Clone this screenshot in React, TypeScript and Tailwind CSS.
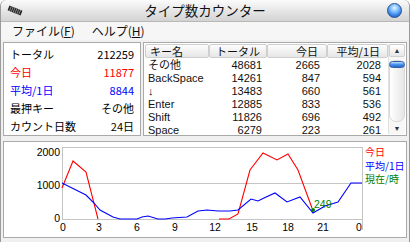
import React from 'react'

const STATS = [
  { label: 'トータル', value: '212259', color: 'text-black' },
  { label: '今日', value: '11877', color: 'text-[#ff0000]' },
  { label: '平均/1日', value: '8844', color: 'text-[#0000ff]' },
  { label: '最押キー', value: 'その他', color: 'text-black' },
  { label: 'カウント日数', value: '24日', color: 'text-black' },
]

const ROWS = [
  ['その他', '48681', '2665', '2028'],
  ['BackSpace', '14261', '847', '594'],
  ['↓', '13483', '660', '561'],
  ['Enter', '12885', '833', '536'],
  ['Shift', '11826', '696', '492'],
  ['Space', '6279', '223', '261'],
]

const RED_A = '62,188 73,161 86,172 98,219'
const RED_B = '219,219 229,219 238,214 250,170 263,153 277,160 288,154 298,170 312,208'
const BLUE =
  '62,183 74,189 86,195 94,203 100,210 113,217 120,219 137,219 142,217 148,216 158,219 165,219 172,218 187,217 198,211 207,210 218,211 230,211 238,210 251,199 258,201 264,198 275,193 287,202 300,197 313,213 325,206 338,202 351,183 362,183'

const X_LABELS: [string, number][] = [
  ['0', 63], ['3', 99], ['6', 137], ['9', 175], ['12', 215],
  ['15', 252], ['18', 288], ['21', 323], ['0', 359],
]

function TitleBar() {
  return (
    <div className="h-[22px] flex items-center rounded-t-[6px] bg-linear-to-b from-[#fbfbfb] to-[#d3d3d3] border-b border-[#b8b8b8]">
      <div className="w-[40px] pl-[6px] flex items-center">
        {/* keyboard-ish app icon */}
        <svg width="16" height="11" viewBox="0 0 16 11">
          <g transform="rotate(22 8 5.5)">
            <rect x="1" y="3" width="14" height="5" fill="#222" />
            <path d="M3 3v5M5 3v5M7 3v5M9 3v5M11 3v5M13 3v5" stroke="#999" strokeWidth="0.8" />
          </g>
        </svg>
      </div>
      <div className="flex-1 text-center text-[13.5px] text-[#111] font-['Noto_Sans_CJK_JP',sans-serif] leading-none pt-[1px]">
        タイプ数カウンター
      </div>
      <div className="w-[40px] flex justify-end pr-[7px]">
        <div className="w-[15px] h-[15px] rounded-full border border-[#2b4f8f] bg-[radial-gradient(circle_at_50%_30%,#e6f4ff_0%,#7fc0ff_35%,#2f7be0_70%,#1a4fb0_100%)]" />
      </div>
    </div>
  )
}

function MenuBar() {
  return (
    <div className="h-[18px] flex items-center gap-[17px] pl-[11px] bg-[#f6f6f6] text-[12px] text-[#111] font-['Noto_Sans_CJK_JP',sans-serif] leading-none">
      <span>ファイル(<span className="underline">F</span>)</span>
      <span>ヘルプ(<span className="underline">H</span>)</span>
    </div>
  )
}

function StatsPanel() {
  return (
    <div className="w-[138px] h-full bg-white border border-[#a9a9a9] pt-[2px] px-[6px] font-['Noto_Sans_CJK_JP',sans-serif] text-[11px]">
      {STATS.map(s => (
        <div key={s.label} className={`h-[18px] flex items-center justify-between leading-none ${s.color}`}>
          <span>{s.label}</span>
          <span>{s.value}</span>
        </div>
      ))}
    </div>
  )
}

function HeaderCell({ children, w, align, pad }: { children: React.ReactNode; w: string; align: string; pad: string }) {
  return (
    <div className={`${w} h-[14px] flex items-center ${align} ${pad} bg-linear-to-b from-[#fdfdfd] to-[#e6e6e6] border border-[#cfcfcf] rounded-[2px] leading-none`}>
      {children}
    </div>
  )
}

function Scrollbar() {
  return (
    <div className="w-[17px] h-full flex flex-col items-center bg-[#f7f7f7] border-l border-[#e0e0e0]">
      <div className="w-[16px] h-[13px] flex items-center justify-center border border-[#cfcfcf] rounded-[2px] bg-linear-to-b from-white to-[#e8e8e8] text-[7px] text-[#333] leading-none">
        ▲
      </div>
      <div className="mt-[3px] w-[16px] flex-1 rounded-[7px] border border-[#d8d8d8] bg-linear-to-r from-white to-[#e6e6e6] flex flex-col items-center">
        <div className="w-[16px] h-[7px] rounded-[4px] border border-[#2d5da8] bg-linear-to-b from-[#bfe0ff] via-[#4a93ea] to-[#2766c8]" />
      </div>
      <div className="w-[16px] h-[12px] flex items-center justify-center text-[7px] text-[#333] leading-none">
        ▼
      </div>
    </div>
  )
}

function KeyTable() {
  return (
    <div className="flex-1 h-full bg-white border border-[#a9a9a9] p-[1px] flex">
      <div className="flex-1 flex flex-col">
        <div className="flex font-['Noto_Sans_CJK_JP',sans-serif] text-[11px] text-[#111]">
          <HeaderCell w="w-[64px]" align="justify-start" pad="pl-[4px]">キー名</HeaderCell>
          <HeaderCell w="w-[58px]" align="justify-end" pad="pr-[6px]">トータル</HeaderCell>
          <HeaderCell w="w-[60px]" align="justify-end" pad="pr-[8px]">今日</HeaderCell>
          <HeaderCell w="w-[61px]" align="justify-end" pad="pr-[7px]">平均/1日</HeaderCell>
        </div>
        <div className="pt-[1px] font-['Liberation_Sans','Noto_Sans_CJK_JP',sans-serif] text-[11px] text-[#111]">
          {ROWS.map(r => (
            <div key={r[0]} className="h-[13px] flex items-center leading-none">
              <span className="w-[64px] pl-[3px]">{r[0]}</span>
              <span className="w-[58px] text-right pr-[5px]">{r[1]}</span>
              <span className="w-[60px] text-right pr-[7px]">{r[2]}</span>
              <span className="w-[61px] text-right pr-[7px]">{r[3]}</span>
            </div>
          ))}
        </div>
      </div>
      <Scrollbar />
    </div>
  )
}

function Chart() {
  return (
    <div className="h-[97px] bg-white border border-[#a9a9a9]">
      <svg width="402" height="95" viewBox="4 142 402 95" className="block">
        {/* frame + grid */}
        <rect x="62.5" y="147.5" width="300" height="72" fill="white" stroke="#c4c4c4" />
        <line x1="62.5" y1="183.5" x2="362.5" y2="183.5" stroke="#c4c4c4" />
        <line x1="362.5" y1="219.5" x2="362.5" y2="230" stroke="#c4c4c4" />
        {/* y labels */}
        <g fontFamily="'Liberation Sans', sans-serif" fontSize="10.5" fill="#000" textAnchor="end">
          <text x="60" y="156">2000</text>
          <text x="60" y="189">1000</text>
          <text x="60" y="222">0</text>
        </g>
        {/* x labels */}
        <g fontFamily="'Liberation Sans', sans-serif" fontSize="10.5" fill="#000" textAnchor="middle">
          {X_LABELS.map(([t, x], i) => (
            <text key={i} x={x} y="231">{t}</text>
          ))}
        </g>
        {/* series */}
        <polyline points={RED_A} fill="none" stroke="#ff0000" strokeWidth="1.1" />
        <polyline points={RED_B} fill="none" stroke="#ff0000" strokeWidth="1.1" />
        <polyline points={BLUE} fill="none" stroke="#0000ff" strokeWidth="1.1" />
        <circle cx="313" cy="210" r="2" fill="#008000" />
        <text x="314" y="208" fontFamily="'Liberation Sans', sans-serif" fontSize="10.5" fill="#008000">249</text>
        {/* legend */}
        <g fontFamily="'Noto Sans CJK JP', sans-serif" fontSize="10">
          <text x="365" y="156" fill="#ff0000">今日</text>
          <text x="365" y="169.5" fill="#0000ff">平均/1日</text>
          <text x="365" y="183" fill="#008000">現在/時</text>
        </g>
      </svg>
    </div>
  )
}

export default function App() {
  return (
    <div className="w-[410px] h-[242px] flex flex-col bg-[#f0f0f0] overflow-hidden rounded-t-[6px] border-x border-[#9a9a9a]">
      <TitleBar />
      <MenuBar />
      <div className="flex-1 flex flex-col pt-[2px] px-[2px] pb-[4px] gap-[5px]">
        <div className="h-[94px] flex gap-[2px]">
          <StatsPanel />
          <KeyTable />
        </div>
        <Chart />
      </div>
    </div>
  )
}
